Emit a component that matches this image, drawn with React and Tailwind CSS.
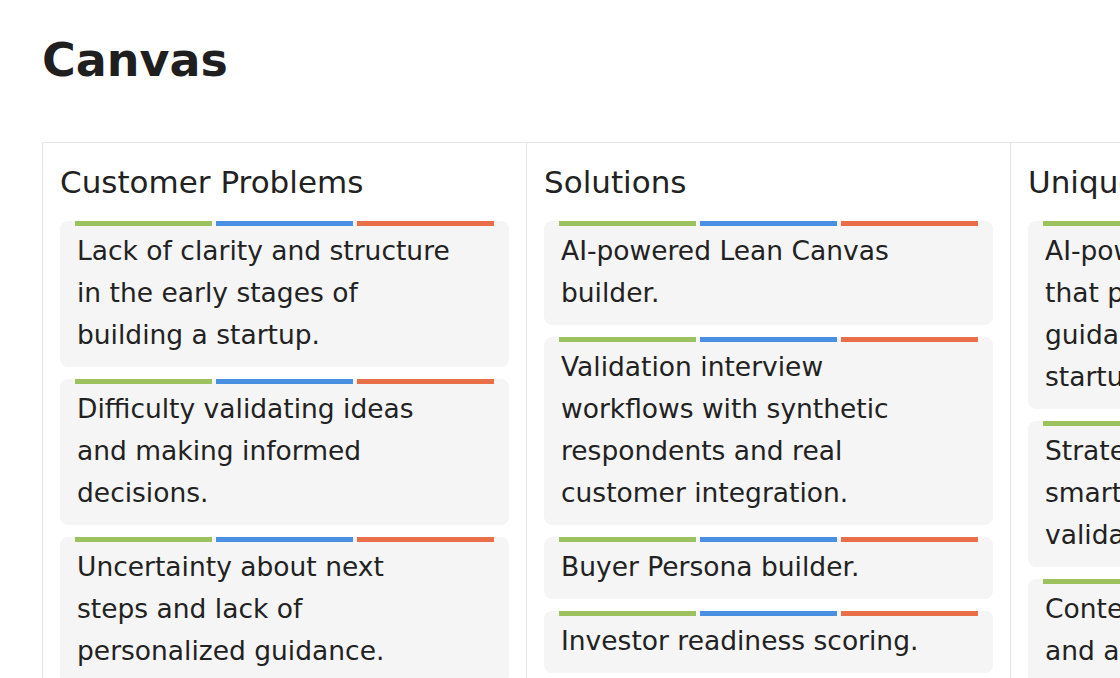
import React from 'react';

const columns = [
  {
    title: 'Customer Problems',
    items: [
      'Lack of clarity and structure in the early stages of building a startup.',
      'Difficulty validating ideas and making informed decisions.',
      'Uncertainty about next steps and lack of personalized guidance.',
    ],
  },
  {
    title: 'Solutions',
    items: [
      'AI-powered Lean Canvas builder.',
      'Validation interview workflows with synthetic respondents and real customer integration.',
      'Buyer Persona builder.',
      'Investor readiness scoring.',
    ],
  },
  {
    title: 'Unique Value Proposition',
    items: [
      'AI-powered virtual mentor that provides tailored guidance for early-stage startups.',
      'Strategic insights through smart market research and validation tools.',
      'Contextual tips, templates and actionable next steps.',
    ],
  },
];

const Card = ({ text }) => (
  <div className="bg-[#f5f5f5] rounded-lg px-[15px] pb-[11px]">
    <div className="flex gap-1">
      <div className="h-[5px] flex-1 bg-[#9bc25f]" />
      <div className="h-[5px] flex-1 bg-[#4a90e2]" />
      <div className="h-[5px] flex-1 bg-[#e86f47]" />
    </div>
    <p className="mt-1 w-[378px] px-[2px] box-content text-[26.5px] leading-[42px] text-[#222]">{text}</p>
  </div>
);

export default function App() {
  return (
    <div className="h-[678px] w-[1120px] overflow-hidden bg-white pl-[42px] pt-[30px]" style={{ fontFamily: '"DejaVu Sans", sans-serif' }}>
      <h1 className="text-[46px] leading-[60px] font-bold text-[#1f1f1f]">Canvas</h1>
      <div className="mt-[52px] flex w-max border border-[#e6e6e6]">
        {columns.map((col) => (
          <div key={col.title} className="w-[484px] shrink-0 border-r border-[#e6e6e6] px-[17px] pt-[18px] pb-6">
            <h2 className="text-[31px] leading-[42px] text-[#222] mb-[18px]">{col.title}</h2>
            <div className="flex flex-col gap-3">
              {col.items.map((t) => (
                <Card key={t} text={t} />
              ))}
            </div>
          </div>
        ))}
      </div>
    </div>
  );
}
